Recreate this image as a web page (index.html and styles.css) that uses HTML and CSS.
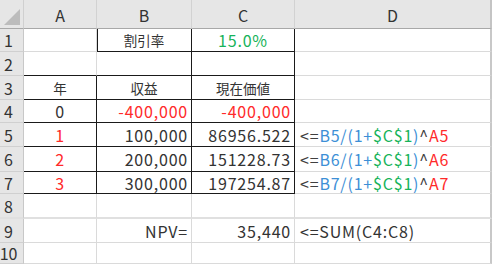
FILE: index.html
```html
<!DOCTYPE html>
<html lang="ja">
<head>
<meta charset="utf-8">
<link rel="stylesheet" href="styles.css">
</head>
<body>
<div class="sheet">
  <div class="corner"><span class="tri"></span></div>
  <div class="ch">A</div><div class="ch">B</div><div class="ch">C</div><div class="ch last">D</div>

  <div class="rh">1</div>
  <div class="c"></div><div class="c c-b bl br bb"><span class="jp">割引率</span></div><div class="c c-b green br bb">15.0%</div><div class="c last"></div>

  <div class="rh">2</div>
  <div class="c bb"></div><div class="c bb br"></div><div class="c bb br"></div><div class="c last"></div>

  <div class="rh">3</div>
  <div class="c c-b br bb"><span class="jp">年</span></div><div class="c c-b br bb"><span class="jp">収益</span></div><div class="c c-b br bb"><span class="jp">現在価値</span></div><div class="c last"></div>

  <div class="rh">4</div>
  <div class="c c-b br bb">0</div><div class="c r red br bb">-400,000</div><div class="c r red br bb">-400,000</div><div class="c last"></div>

  <div class="rh">5</div>
  <div class="c c-b red br bb">1</div><div class="c r br bb">100,000</div><div class="c r br bb">86956.522</div><div class="c l last"><span class="g">&lt;=</span><span class="blue">B5/(1+</span><span class="green">$C$1</span><span class="blue">)</span><span class="g">^</span><span class="red">A5</span></div>

  <div class="rh">6</div>
  <div class="c c-b red br bb">2</div><div class="c r br bb">200,000</div><div class="c r br bb">151228.73</div><div class="c l last"><span class="g">&lt;=</span><span class="blue">B6/(1+</span><span class="green">$C$1</span><span class="blue">)</span><span class="g">^</span><span class="red">A6</span></div>

  <div class="rh">7</div>
  <div class="c c-b red br bb">3</div><div class="c r br bb">300,000</div><div class="c r br bb">197254.87</div><div class="c l last"><span class="g">&lt;=</span><span class="blue">B7/(1+</span><span class="green">$C$1</span><span class="blue">)</span><span class="g">^</span><span class="red">A7</span></div>

  <div class="rh thick">8</div>
  <div class="c thick"></div><div class="c thick"></div><div class="c thick"></div><div class="c last thick"></div>

  <div class="rh">9</div>
  <div class="c"></div><div class="c r">NPV=</div><div class="c r">35,440</div><div class="c l last">&lt;=SUM(C4:C8)</div>

  <div class="rh">10</div>
  <div class="c"></div><div class="c"></div><div class="c"></div><div class="c last"></div>
</div>
</body>
</html>
```

FILE: styles.css
```css
html, body {
  margin: 0;
  padding: 0;
  background: #ffffff;
  overflow: hidden;
}
body {
  width: 494px;
  height: 264px;
  font-family: "Noto Sans CJK JP", "Noto Sans", sans-serif;
  font-size: 16px;
  line-height: 18px;
  color: #333333;
}
.sheet {
  display: grid;
  grid-template-columns: 24px 73px 95px 103px 197px;
  grid-template-rows: 29px 23px 24px 24px 23px 24px 25px 22px 25px 24px 21px;
}
.corner {
  background: #e6e6e6;
  border-right: 1px solid #d0d0d0;
  border-bottom: 1px solid #a8a8a8;
  position: relative;
}
.tri {
  position: absolute;
  right: 3px;
  bottom: 3px;
  width: 0;
  height: 0;
  border-left: 16px solid transparent;
  border-bottom: 16px solid #bcbcbc;
}
.ch {
  background: #e6e6e6;
  border-right: 1px solid #d2d2d2;
  border-bottom: 1px solid #a8a8a8;
  display: flex;
  align-items: center;
  justify-content: center;
  padding-top: 2px;
  color: #333;
}
.ch.last {
  border-right: 2px solid #c4c4c4;
}
.rh {
  background: #e6e6e6;
  border-right: 1px solid #c8c8c8;
  border-bottom: 1px solid #d0d0d0;
  display: flex;
  align-items: center;
  justify-content: center;
  padding-right: 6px;
  color: #333;
}
.c {
  border-right: 1px solid #dadada;
  border-bottom: 1px solid #dadada;
  display: flex;
  align-items: center;
  white-space: nowrap;
  overflow: hidden;
  letter-spacing: 0.8px;
}
.c.last {
  border-right: 2px solid #c8c8c8;
}
.jp {
  font-size: 13.5px;
  letter-spacing: 0;
}
.thick {
  border-bottom: 2px solid #e0e0e0;
}
.c-b { justify-content: center; }
.r { justify-content: flex-end; padding-right: 3px; }
.l { justify-content: flex-start; padding-left: 5px; }
.br { border-right-color: #1a1a1a; }
.bb { border-bottom-color: #1a1a1a; }
.bl { box-shadow: inset 1px 0 0 #1a1a1a; }
.red { color: #ff2a2a; }
.green { color: #17b35a; }
.blue { color: #3d8fd6; }
.g { color: #404040; }
```
